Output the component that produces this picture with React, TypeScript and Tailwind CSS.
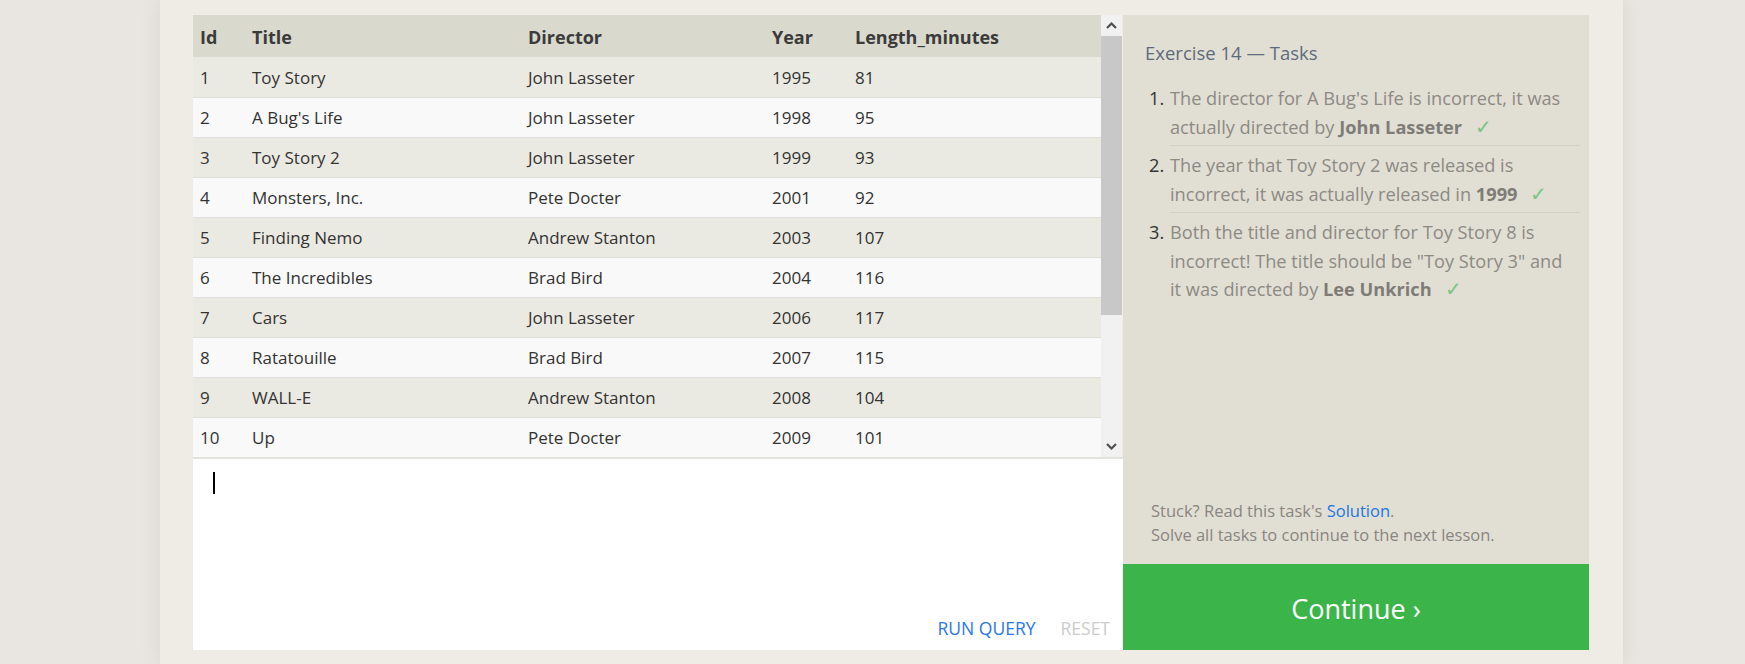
import React from "react"

type Movie = {
  id: number
  title: string
  director: string
  year: number
  length: number
}

const movies: Movie[] = [
  { id: 1, title: "Toy Story", director: "John Lasseter", year: 1995, length: 81 },
  { id: 2, title: "A Bug's Life", director: "John Lasseter", year: 1998, length: 95 },
  { id: 3, title: "Toy Story 2", director: "John Lasseter", year: 1999, length: 93 },
  { id: 4, title: "Monsters, Inc.", director: "Pete Docter", year: 2001, length: 92 },
  { id: 5, title: "Finding Nemo", director: "Andrew Stanton", year: 2003, length: 107 },
  { id: 6, title: "The Incredibles", director: "Brad Bird", year: 2004, length: 116 },
  { id: 7, title: "Cars", director: "John Lasseter", year: 2006, length: 117 },
  { id: 8, title: "Ratatouille", director: "Brad Bird", year: 2007, length: 115 },
  { id: 9, title: "WALL-E", director: "Andrew Stanton", year: 2008, length: 104 },
  { id: 10, title: "Up", director: "Pete Docter", year: 2009, length: 101 },
]

function Check() {
  return <span className="ml-[13px] text-[20px] text-[#7cc482] font-normal">✓</span>
}

function ScrollBar() {
  return (
    <div className="w-[21px] bg-[#f1f1f1] flex flex-col">
      <div className="h-[21px] flex items-center justify-center">
        <svg width="11" height="7" viewBox="0 0 11 7">
          <path d="M1 6 L5.5 1.5 L10 6" stroke="#505050" strokeWidth="2.2" fill="none" />
        </svg>
      </div>
      <div className="h-[279px] bg-[#c8c8c8]" />
      <div className="flex-1" />
      <div className="h-[21px] flex items-center justify-center">
        <svg width="11" height="7" viewBox="0 0 11 7">
          <path d="M1 1 L5.5 5.5 L10 1" stroke="#505050" strokeWidth="2.2" fill="none" />
        </svg>
      </div>
    </div>
  )
}

function ResultTable() {
  return (
    <div className="flex h-[444px] border-b-2 border-[#e2e2df]">
      <div className="w-[908px] overflow-hidden">
        <table className="w-full table-fixed border-collapse text-[17px] text-[#333]">
          <colgroup>
            <col className="w-[52px]" />
            <col className="w-[276px]" />
            <col className="w-[244px]" />
            <col className="w-[83px]" />
            <col />
          </colgroup>
          <thead>
            <tr className="h-[42px] bg-[#dad9cd] text-left text-[#3b3b3b] text-[18px]">
              <th className="px-[7px] pt-[2px] font-bold">Id</th>
              <th className="px-[7px] pt-[2px] font-bold">Title</th>
              <th className="px-[7px] pt-[2px] font-bold">Director</th>
              <th className="px-[7px] pt-[2px] font-bold">Year</th>
              <th className="px-[7px] pt-[2px] font-bold">Length_minutes</th>
            </tr>
          </thead>
          <tbody>
            {movies.map((m, i) => (
              <tr
                key={m.id}
                className={
                  (i % 2 === 0 ? "bg-[#ebeae2]" : "bg-[#f9f9f9]") +
                  " h-[40px] border-b border-[#dededa]"
                }
              >
                <td className="px-[7px] pt-[1px]">{m.id}</td>
                <td className="px-[7px] pt-[1px]">{m.title}</td>
                <td className="px-[7px] pt-[1px]">{m.director}</td>
                <td className="px-[7px] pt-[1px]">{m.year}</td>
                <td className="px-[7px] pt-[1px]">{m.length}</td>
              </tr>
            ))}
          </tbody>
        </table>
      </div>
      <ScrollBar />
    </div>
  )
}

function Editor() {
  return (
    <div className="flex-1 bg-white flex flex-col pl-[20px] pr-[13px] pt-[13px] pb-[10px]">
      <div className="w-[2px] h-[22px] bg-black" />
      <div className="flex-1" />
      <div className="flex justify-end gap-[25px] text-[17.5px] leading-[24px]">
        <button className="text-[#2a78e0]">RUN QUERY</button>
        <button className="text-[#cccccc]">RESET</button>
      </div>
    </div>
  )
}

function TaskPanel() {
  return (
    <div className="w-[466px] bg-[#e1dfd4] flex flex-col">
      <div className="flex-1 pl-[22px] pr-[16px] pt-[23px]">
        <h2 className="text-[18.5px] leading-[30px] text-[#5f6b7b]">Exercise 14 — Tasks</h2>
        <ol className="mt-[16px] text-[18.2px] leading-[28.5px] text-[#8d8a84]">
          <li className="flex">
            <span className="w-[25px] pl-[4px] text-[#333]">1.</span>
            <div className="flex-1 pb-[4px] pr-[7px] mr-[-7px] border-b border-[#d3d1c6]">
              The director for A Bug's Life is incorrect, it was actually directed by{" "}
              <b className="text-[#7f7c77]">John Lasseter</b>
              <Check />
            </div>
          </li>
          <li className="flex">
            <span className="w-[25px] pl-[4px] pt-[5px] text-[#333]">2.</span>
            <div className="flex-1 pt-[5px] pb-[4px] pr-[7px] mr-[-7px] border-b border-[#d3d1c6]">
              The year that Toy Story 2 was released is incorrect, it was actually released in{" "}
              <b className="text-[#7f7c77]">1999</b>
              <Check />
            </div>
          </li>
          <li className="flex">
            <span className="w-[25px] pl-[4px] pt-[5px] text-[#333]">3.</span>
            <div className="flex-1 pt-[5px]">
              Both the title and director for Toy Story 8 is incorrect! The title should be "Toy Story 3" and it was directed by{" "}
              <b className="text-[#7f7c77]">Lee Unkrich</b>
              <Check />
            </div>
          </li>
        </ol>
      </div>
      <div className="pl-[28px] pb-[17px] text-[16.5px] leading-[24px] text-[#8a8580]">
        <p>
          Stuck? Read this task's <a className="text-[#2176e0]">Solution</a>.
        </p>
        <p>Solve all tasks to continue to the next lesson.</p>
      </div>
      <button className="h-[86px] pt-[4px] bg-[#3bb54a] text-white text-[27px] flex items-center justify-center">
        Continue ›
      </button>
    </div>
  )
}

export default function App() {
  return (
    <div className="min-h-screen bg-[#e9e5e1] font-['Open_Sans',sans-serif]">
      <div className="ml-[160px] w-[1463px] min-h-[664px] bg-[#efece5] px-[33px] pt-[15px] pb-[14px] shadow-[0_0_22px_rgba(0,0,0,0.07)]">
        <div className="flex h-[635px]">
          <div className="w-[930px] flex flex-col">
            <ResultTable />
            <Editor />
          </div>
          <TaskPanel />
        </div>
      </div>
    </div>
  )
}
